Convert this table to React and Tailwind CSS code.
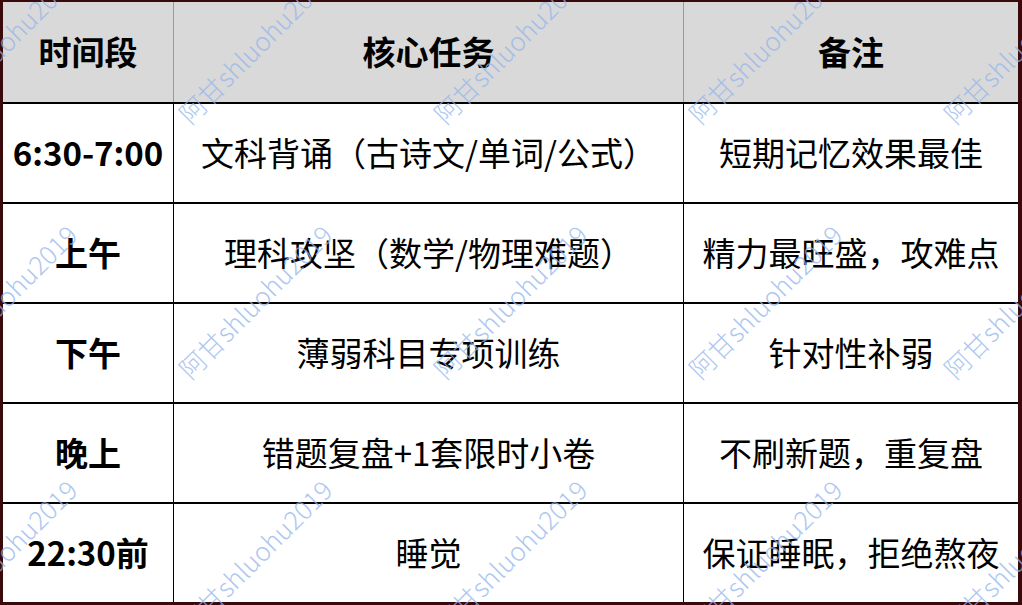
const rows = [
  ["6:30-7:00", "文科背诵（古诗文/单词/公式）", "短期记忆效果最佳"],
  ["上午", "理科攻坚（数学/物理难题）", "精力最旺盛，攻难点"],
  ["下午", "薄弱科目专项训练", "针对性补弱"],
  ["晚上", "错题复盘+1套限时小卷", "不刷新题，重复盘"],
  ["22:30前", "睡觉", "保证睡眠，拒绝熬夜"],
]

const marks = []
for (const y of [118, 373, 628]) {
  for (const x of [-72, 183, 438, 693, 948]) {
    marks.push({ x, y })
  }
}

export default function App() {
  return (
    <div
      className="relative w-[1022px] h-[605px] overflow-hidden bg-[#3a0909] pl-[3px] pt-[2px] pr-[4px] pb-[3px]"
      style={{ fontFamily: '"Noto Sans CJK SC", "Noto Sans", sans-serif' }}
    >
      <div className="w-full h-full bg-white flex flex-col text-black">
        {/* header */}
        <div className="h-[100px] flex bg-[#d9d9d9] font-bold text-[33px]">
          <div className="w-[171px] flex items-center justify-center border-r-[1.5px] border-[#9a9a9a]">时间段</div>
          <div className="w-[510px] flex items-center justify-center border-r-[1.5px] border-[#9a9a9a]">核心任务</div>
          <div className="flex-1 flex items-center justify-center">备注</div>
        </div>
        {rows.map((r, i) => (
          <div key={i} className="h-[100px] flex border-t-2 border-black text-[33px]">
            <div className="w-[171px] flex items-center justify-center border-r-[1.5px] border-black font-bold">{r[0]}</div>
            <div className="w-[510px] flex items-center justify-center border-r-[1.5px] border-black">{r[1]}</div>
            <div className="flex-1 flex items-center justify-center">{r[2]}</div>
          </div>
        ))}
      </div>

      {/* watermark overlay */}
      {marks.map((m, i) => (
        <span
          key={i}
          className="absolute whitespace-nowrap text-[26px] font-light leading-none text-[#93b5ec] opacity-75 origin-left -rotate-45 pointer-events-none"
          style={{ left: m.x, top: m.y - 13 }}
        >
          阿甘shluohu2019
        </span>
      ))}
    </div>
  )
}
